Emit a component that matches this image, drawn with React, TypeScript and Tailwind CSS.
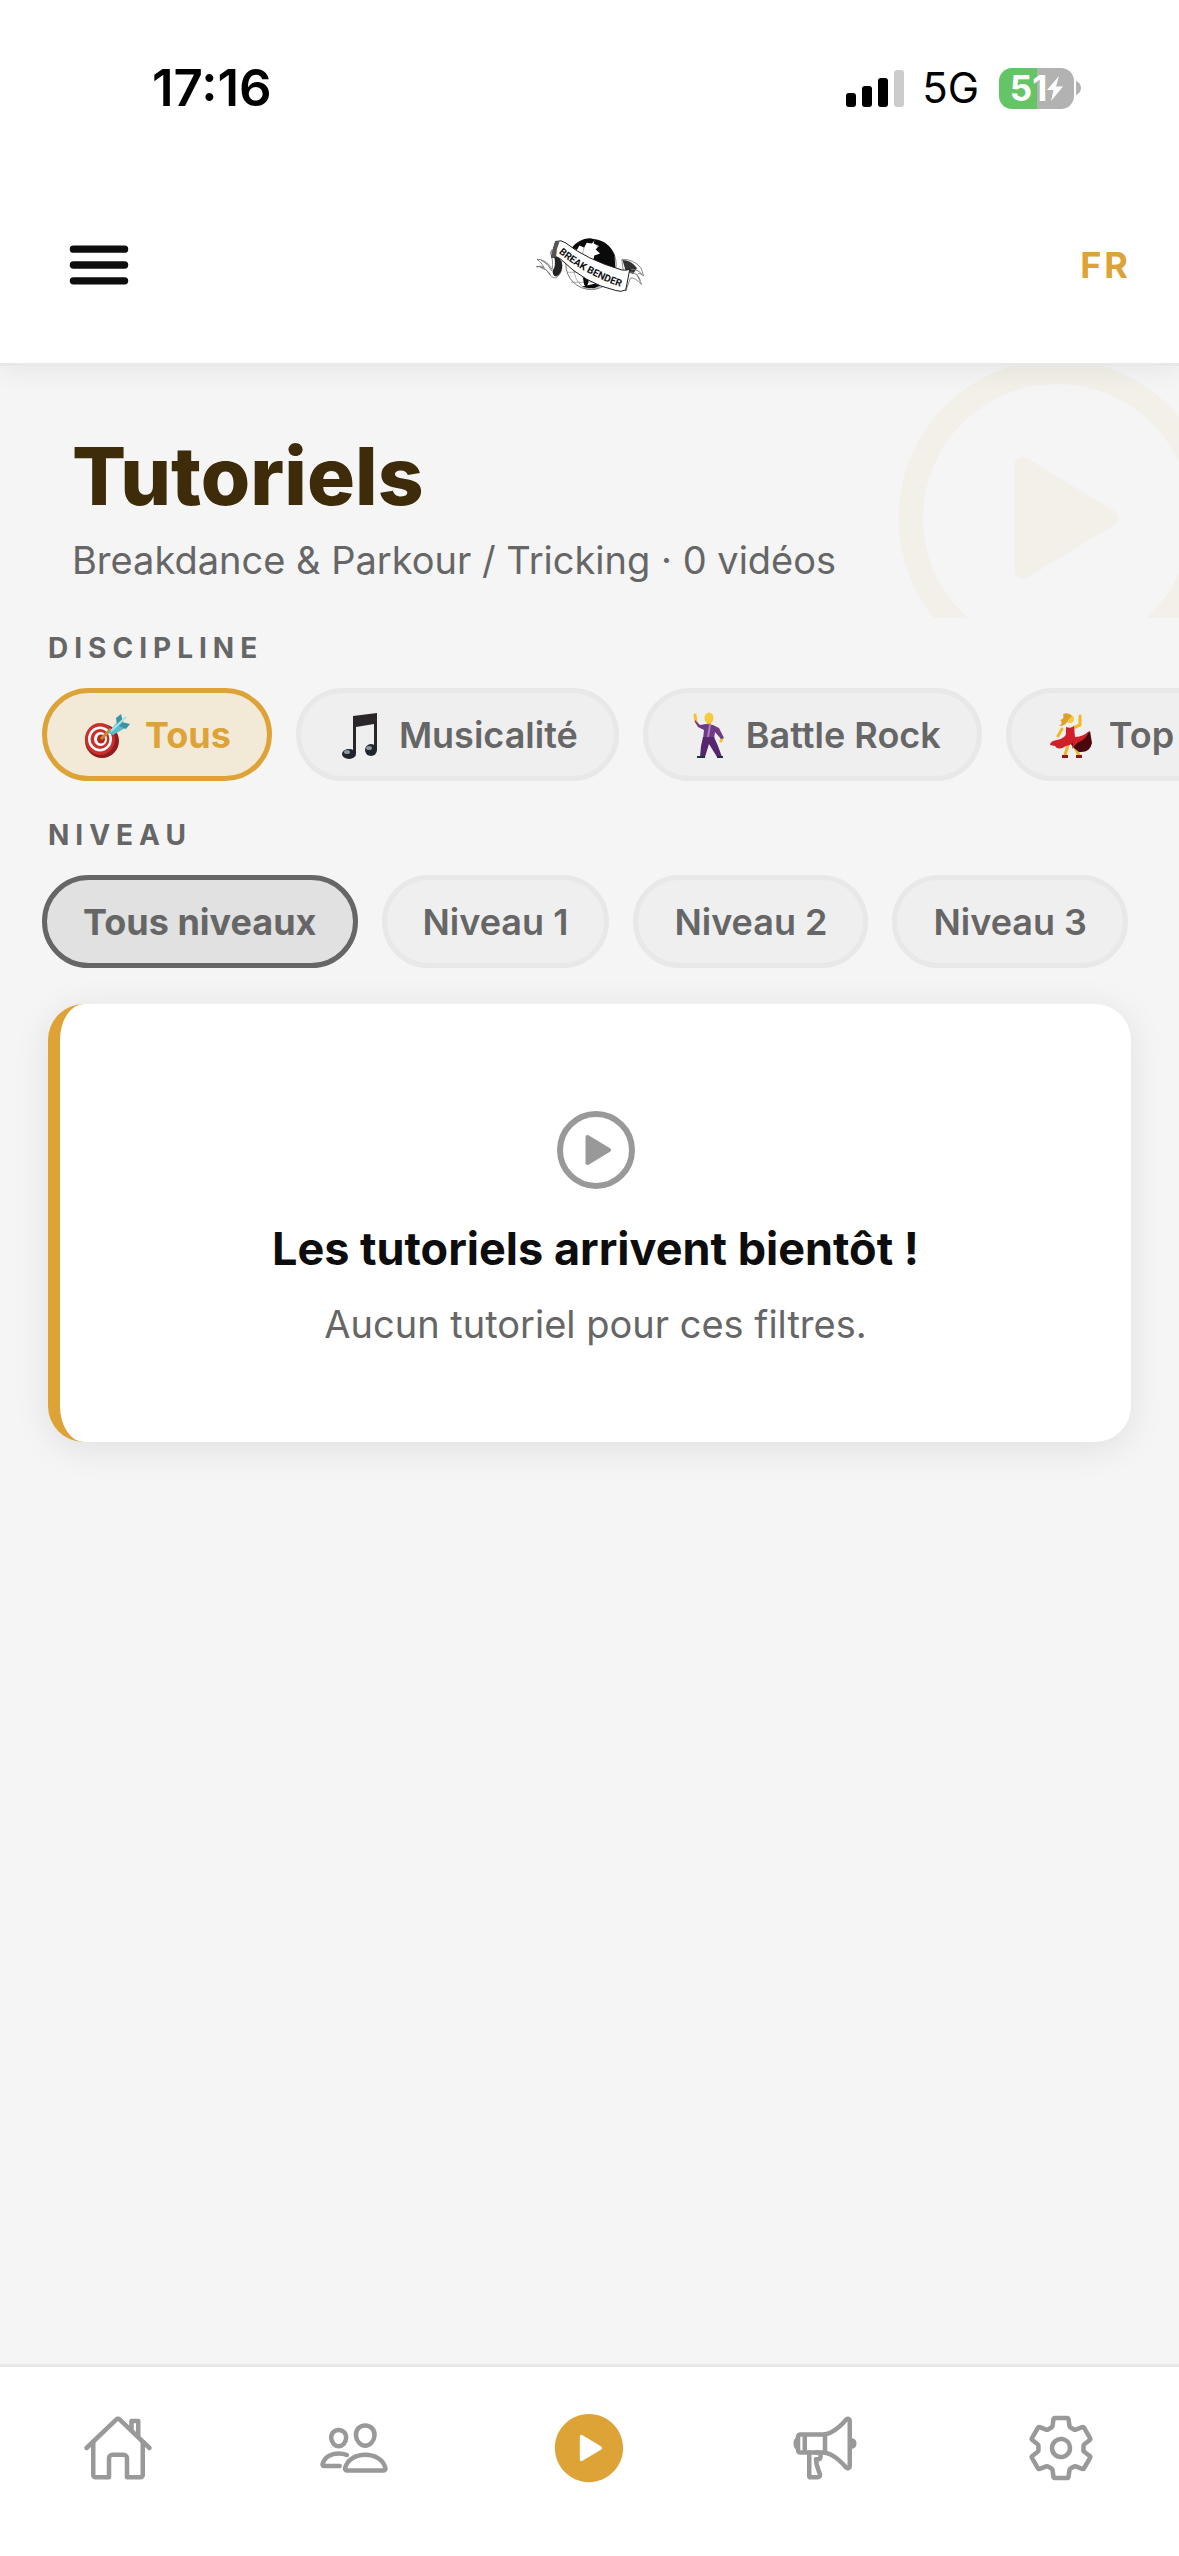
import { useState } from 'react'
import type { ReactNode } from 'react'
import clsx from 'clsx'
import {
  IoHomeOutline,
  IoMegaphoneOutline,
  IoMenu,
  IoPeopleOutline,
  IoPlayCircle,
  IoPlayCircleOutline,
  IoSettingsOutline,
} from 'react-icons/io5'

const disciplines = [
  { id: 'all', label: 'Tous', icon: <TargetIcon /> },
  { id: 'musicality', label: 'Musicalité', icon: <NoteIcon /> },
  { id: 'battle-rock', label: 'Battle Rock', icon: <DancerManIcon /> },
  { id: 'top-rock', label: 'Top Rock', icon: <DancerWomanIcon /> },
]

const levels = [
  { id: 'all', label: 'Tous niveaux' },
  { id: '1', label: 'Niveau 1' },
  { id: '2', label: 'Niveau 2' },
  { id: '3', label: 'Niveau 3' },
]

const tabs = [
  { name: 'Accueil', Icon: IoHomeOutline },
  { name: 'Communauté', Icon: IoPeopleOutline },
  { name: 'Tutoriels', Icon: IoPlayCircle, active: true },
  { name: 'Annonces', Icon: IoMegaphoneOutline },
  { name: 'Réglages', Icon: IoSettingsOutline },
]

export default function App() {
  const [discipline, setDiscipline] = useState('all')
  const [level, setLevel] = useState('all')

  return (
    <div className="min-h-screen flex flex-col overflow-hidden bg-[#f5f5f5] font-['Inter',sans-serif]">
      <header className="relative z-10 bg-white border-b-3 border-[#e8e8e8] shadow-[0_6px_24px_rgba(0,0,0,0.06)]">
        <StatusBar />
        <div className="grid grid-cols-[1fr_auto_1fr] items-center h-[187px] pb-[9px] px-12">
          <button type="button" aria-label="Menu" className="justify-self-start pl-3">
            <IoMenu className="size-[78px] text-[#0d0d0d]" />
          </button>
          <Logo />
          <button type="button" className="justify-self-end text-[36px] leading-12 font-bold tracking-[3px] text-[#dda337]">
            FR
          </button>
        </div>
      </header>

      <main className="flex-1">
        <section className="relative overflow-hidden pt-[62px] pb-[34px] px-18">
          <IoPlayCircleOutline className="absolute -top-[43px] -right-[73px] size-[390px] text-[#dda337] opacity-5" />
          <h1 className="text-[80px] leading-24 font-extrabold text-[#3d2b0a]">Tutoriels</h1>
          <p className="mt-3 text-[38px] leading-12 text-[#666666]">Breakdance &amp; Parkour / Tricking · 0 vidéos</p>
        </section>

        <div className="flex flex-col gap-9 pt-3">
          <FilterGroup title="Discipline">
            {disciplines.map(d => (
              <Chip
                key={d.id}
                selected={d.id === discipline}
                selectedClass="border-[#dda337] bg-[#f2e9d6] text-[#dda337]"
                onClick={() => setDiscipline(d.id)}
              >
                {d.icon}
                {d.label}
              </Chip>
            ))}
          </FilterGroup>

          <FilterGroup title="Niveau">
            {levels.map(l => (
              <Chip
                key={l.id}
                selected={l.id === level}
                selectedClass="border-[#666666] bg-[#e1e1e1] text-[#666666]"
                onClick={() => setLevel(l.id)}
              >
                {l.label}
              </Chip>
            ))}
          </FilterGroup>

          <section className="mx-12 pt-[98px] pb-[94px] flex flex-col items-center text-center bg-white rounded-[36px] border-l-12 border-[#dda337] shadow-[0_6px_36px_rgba(0,0,0,0.09)]">
            <IoPlayCircleOutline className="size-24 text-[#999999]" />
            <h2 className="mt-6 text-[45px] leading-[54px] font-bold text-[#0d0d0d]">Les tutoriels arrivent bientôt !</h2>
            <p className="mt-6 text-[38px] leading-12 text-[#666666]">Aucun tutoriel pour ces filtres.</p>
          </section>
        </div>
      </main>

      <nav className="grid grid-cols-5 pt-[39px] pb-[66px] bg-white border-t-3 border-[#e8e8e8]">
        {tabs.map(({ name, Icon, active }) => (
          <a key={name} href="#" aria-label={name} className="flex items-center justify-center h-21">
            <Icon className={active ? 'size-21 text-[#dda337]' : 'size-18 text-[#999999]'} />
          </a>
        ))}
      </nav>
    </div>
  )
}

function FilterGroup({ title, children }: { title: string; children: ReactNode }) {
  return (
    <section>
      <h3 className="px-12 mb-[22px] text-[28px] leading-9 font-bold uppercase tracking-[6px] text-[#666666]">{title}</h3>
      <div className="flex gap-6 px-[42px] overflow-hidden">{children}</div>
    </section>
  )
}

type ChipProps = {
  selected: boolean
  selectedClass: string
  onClick: () => void
  children: ReactNode
}

function Chip({ selected, selectedClass, onClick, children }: ChipProps) {
  return (
    <button
      type="button"
      aria-pressed={selected}
      onClick={onClick}
      className={clsx(
        'flex items-center shrink-0 gap-[14px] h-[93px] px-9 rounded-full border-5 text-[36px] leading-12 whitespace-nowrap',
        selected ? 'font-bold' : 'font-semibold',
        selected ? selectedClass : 'border-[#e8e8e8] bg-[#efefef] text-[#666666]',
      )}
    >
      {children}
    </button>
  )
}

function StatusBar() {
  return (
    <div className="flex items-center justify-between h-44 pl-[152px] pr-[98px] text-black">
      <span className="text-[51px] leading-15 font-semibold">17:16</span>
      <div className="flex items-center">
        <svg viewBox="0 0 58 37" className="w-[58px] h-[37px]" aria-hidden="true">
          <rect x="0" y="23" width="10" height="14" rx="3" />
          <rect x="16" y="16" width="10" height="21" rx="3" />
          <rect x="32" y="8" width="10" height="29" rx="3" />
          <rect x="48" y="0" width="10" height="37" rx="3" fill="#cccccc" />
        </svg>
        <span className="ml-[18px] text-[42px] leading-12">5G</span>
        <div className="ml-5 flex items-center justify-center w-[75px] h-[41px] rounded-[13px] bg-[linear-gradient(90deg,#65c466_51%,#b2b2b2_51%)] text-white">
          <span className="text-[35px] leading-10 font-bold">51</span>
          <svg viewBox="0 0 16 25" className="w-4 h-[25px]" aria-hidden="true">
            <path d="M12 0 0 14h6.500L4 25 16 10.500H9z" fill="currentColor" />
          </svg>
        </div>
        <svg viewBox="0 0 5 14" className="ml-[2px] w-[5px] h-[14px]" aria-hidden="true">
          <path d="M0 0q5 2 5 7t-5 7z" fill="#b2b2b2" />
        </svg>
      </div>
    </div>
  )
}

function Logo() {
  return (
    <svg viewBox="46 56 332 174" className="w-[110px] h-[58px]" role="img" aria-label="Break Bender">
      {/* globe */}
      <circle cx="215" cy="141" r="76" fill="#fff" stroke="#333" strokeWidth="2" />
      <g fill="none" stroke="#888" strokeWidth="2">
        <path d="M140 128h150M142 165h146M155 195h115" />
        <ellipse cx="215" cy="141" rx="28" ry="76" />
        <ellipse cx="215" cy="141" rx="54" ry="76" />
      </g>
      <g fill="#0a0a0a">
        <path d="M158 90q20-26 52-28l18 4-10 12-16-2-8 14-14-6-8 14z" />
        <path d="M226 66q42 4 60 46l3 50-20 0-22-22-26-8 4-18 18-6-14-12 10-10-16-8z" />
        <path d="M172 150l30 8 10 20-10 34-8-10-4-28z" />
        <path d="M188 208q30 12 58-4l-8-8-22 6z" />
      </g>
      {/* ribbon tails */}
      <path d="M98 96q-4 10 0 22l26 10q12 34-14 54-16 0-24-16-12-20-36-18 18-4 24 2-12-20-22-24 26-2 46 30 4-30-6-50z" fill="#fff" stroke="#555" strokeWidth="2" />
      <path d="M104 118q22 0 24 26 0 26-18 34-14-4-10-20 10-12 4-40z" fill="#222" />
      <path d="M64 128q20 8 34 34M62 150q18 4 32 22" fill="none" stroke="#777" strokeWidth="3" />
      <path d="M308 126q34-2 58 26l8 24q-16-12-20-4l14 30q-20-22-34-20l-14 40z" fill="#fff" stroke="#555" strokeWidth="2" />
      <path d="M310 128q26 0 44 24l-12 18-22-8z" fill="#333" />
      <path d="M330 164q24 0 34 26M336 156q24 0 34 18" fill="none" stroke="#777" strokeWidth="3" />
      {/* ribbon front */}
      <path d="M108 72q18-6 30 4 62 50 170 82 14 2 24-2l-12 62q-14 8-30 2-92-20-168-96-10-10-26-4z" fill="#fff" stroke="#1a1a1a" strokeWidth="3" />
      <path d="M108 72q-10 18-12 48l14-2q0-24 10-46z" fill="#555" />
      <path id="ribbon" d="M117 106q78 66 190 104" fill="none" />
      <text className="font-['Roboto',sans-serif] text-[30px] font-bold" fill="#111">
        <textPath href="#ribbon">BREAK BENDER</textPath>
      </text>
    </svg>
  )
}

function TargetIcon() {
  return (
    <svg viewBox="0 0 48 48" className="size-12" aria-hidden="true">
      <ellipse cx="19" cy="30" rx="17" ry="17" fill="#8f1d1d" />
      <ellipse cx="17" cy="28" rx="15" ry="16" fill="#c9302c" />
      <ellipse cx="17" cy="28" rx="12" ry="12.500" fill="#fff" />
      <ellipse cx="17" cy="28" rx="9.500" ry="10" fill="#c9302c" />
      <ellipse cx="17.500" cy="28" rx="6.500" ry="7" fill="#fff" />
      <ellipse cx="18" cy="28" rx="4" ry="4.500" fill="#b3261e" />
      <path d="m18 28 10-10" stroke="#c98a2b" strokeWidth="3" />
      <path d="m25 22 11-13 2 6 6 1-14 8z" fill="#5dbccb" />
      <path d="m34 14-1-7 5-4 2 8zM36 15l7 3 4-5-8-2z" fill="#3a94a5" />
      <path d="m28 20 15-14" stroke="#a5e4ec" strokeWidth="2" />
    </svg>
  )
}

function NoteIcon() {
  return (
    <svg viewBox="0 0 48 48" className="size-12" aria-hidden="true">
      <path d="M16 5 40 2v37h-3V13l-18 3v26h-3z" fill="#2b2629" />
      <ellipse cx="12" cy="43" rx="7" ry="5" fill="#20262b" />
      <ellipse cx="34" cy="39" rx="6" ry="6" fill="#20262b" />
      <ellipse cx="10" cy="41" rx="3" ry="2" fill="#8b979d" />
      <ellipse cx="32" cy="37" rx="3" ry="2" fill="#8b979d" />
    </svg>
  )
}

function DancerManIcon() {
  return (
    <svg viewBox="0 0 48 48" className="size-12" aria-hidden="true">
      <path d="m11 4 1 7M38 27l-1 3" stroke="#f5bf2f" strokeWidth="3" strokeLinecap="round" />
      <path d="M25 10v5" stroke="#e0a526" strokeWidth="4" />
      <ellipse cx="25" cy="7" rx="4.500" ry="5.500" fill="#f7c93e" />
      <path d="m11 9 5 5 6-1 7 1 6 3 5 10-3 1-6-7-1 7H19l1-9-6-3-3-5z" fill="#6d3a83" />
      <path d="M19 26h11l4 9 4 11h-5l-8-13-4 13h-5l1-11z" fill="#56276c" />
      <path d="m26 14-2 12" stroke="#b27bc5" strokeWidth="2" />
      <path d="M13 45h8v2h-8zM33 45h6v2h-6z" fill="#1f3240" />
    </svg>
  )
}

function DancerWomanIcon() {
  return (
    <svg viewBox="0 0 48 48" className="size-12" aria-hidden="true">
      <path d="m15 18-4 7M33 5v9l-7 3M21 34l-3 10M26 33l6 11" fill="none" stroke="#f2b824" strokeWidth="3" strokeLinecap="round" />
      <path d="M26 28q12-2 17-8l2 12q-2 10-13 9-6-4-9-9z" fill="#4a080d" />
      <path d="M19 16q5 2 8-1l1 11q-1 8-9 9-8 5-11 0l-5-1q0-4 7-5 8-2 9-6z" fill="#cf202a" />
      <path d="M27 26q9 0 15-6-2 7-8 10-5 2-9 8z" fill="#cf202a" />
      <circle cx="23" cy="8" r="4" fill="#f7c93e" />
      <path d="M16 3q6-2 9 2l-4 4q-2 6-9 6 5-3 1-6 5-1 3-6z" fill="#dba12a" />
      <path d="M15 44h6v3h-6zM29 44h6v3h-6z" fill="#8b1a1a" />
    </svg>
  )
}
